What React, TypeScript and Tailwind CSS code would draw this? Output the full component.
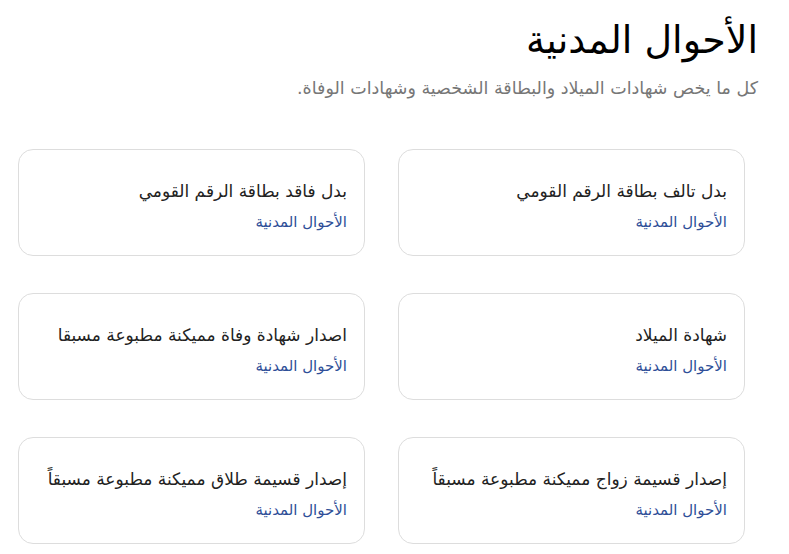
const services = [
    "بدل تالف بطاقة الرقم القومي",
    "بدل فاقد بطاقة الرقم القومي",
    "شهادة الميلاد",
    "اصدار شهادة وفاة مميكنة مطبوعة مسبقا",
    "إصدار قسيمة زواج مميكنة مطبوعة مسبقاً",
    "إصدار قسيمة طلاق مميكنة مطبوعة مسبقاً",
];

const App = () => {
    return (
        <div dir="rtl" className="w-[789px] h-[554px] bg-white overflow-hidden font-['DejaVu_Sans',sans-serif]">
            <div className="pr-[31px] pt-[14px]">
                <h1 className="text-[38px] leading-[52px] text-black font-normal">الأحوال المدنية</h1>
                <p className="mt-[10px] text-[17.5px] leading-6 text-[#777777]">كل ما يخص شهادات الميلاد والبطاقة الشخصية وشهادات الوفاة.</p>
            </div>
            <div className="grid grid-cols-2 gap-x-[33px] gap-y-[37px] mr-[44px] ml-[18px] mt-[49px]">
                {services.map((title) => (
                    <div key={title} className="h-[107px] rounded-[15px] border border-[#dddddd] bg-white px-[17px] pt-[27px]">
                        <div className="text-[17px] leading-7 text-[#222222]">{title}</div>
                        <div className="mt-[7px] text-[15px] leading-5 text-[#2f4f98]">الأحوال المدنية</div>
                    </div>
                ))}
            </div>
        </div>
    );
};

export default App;
